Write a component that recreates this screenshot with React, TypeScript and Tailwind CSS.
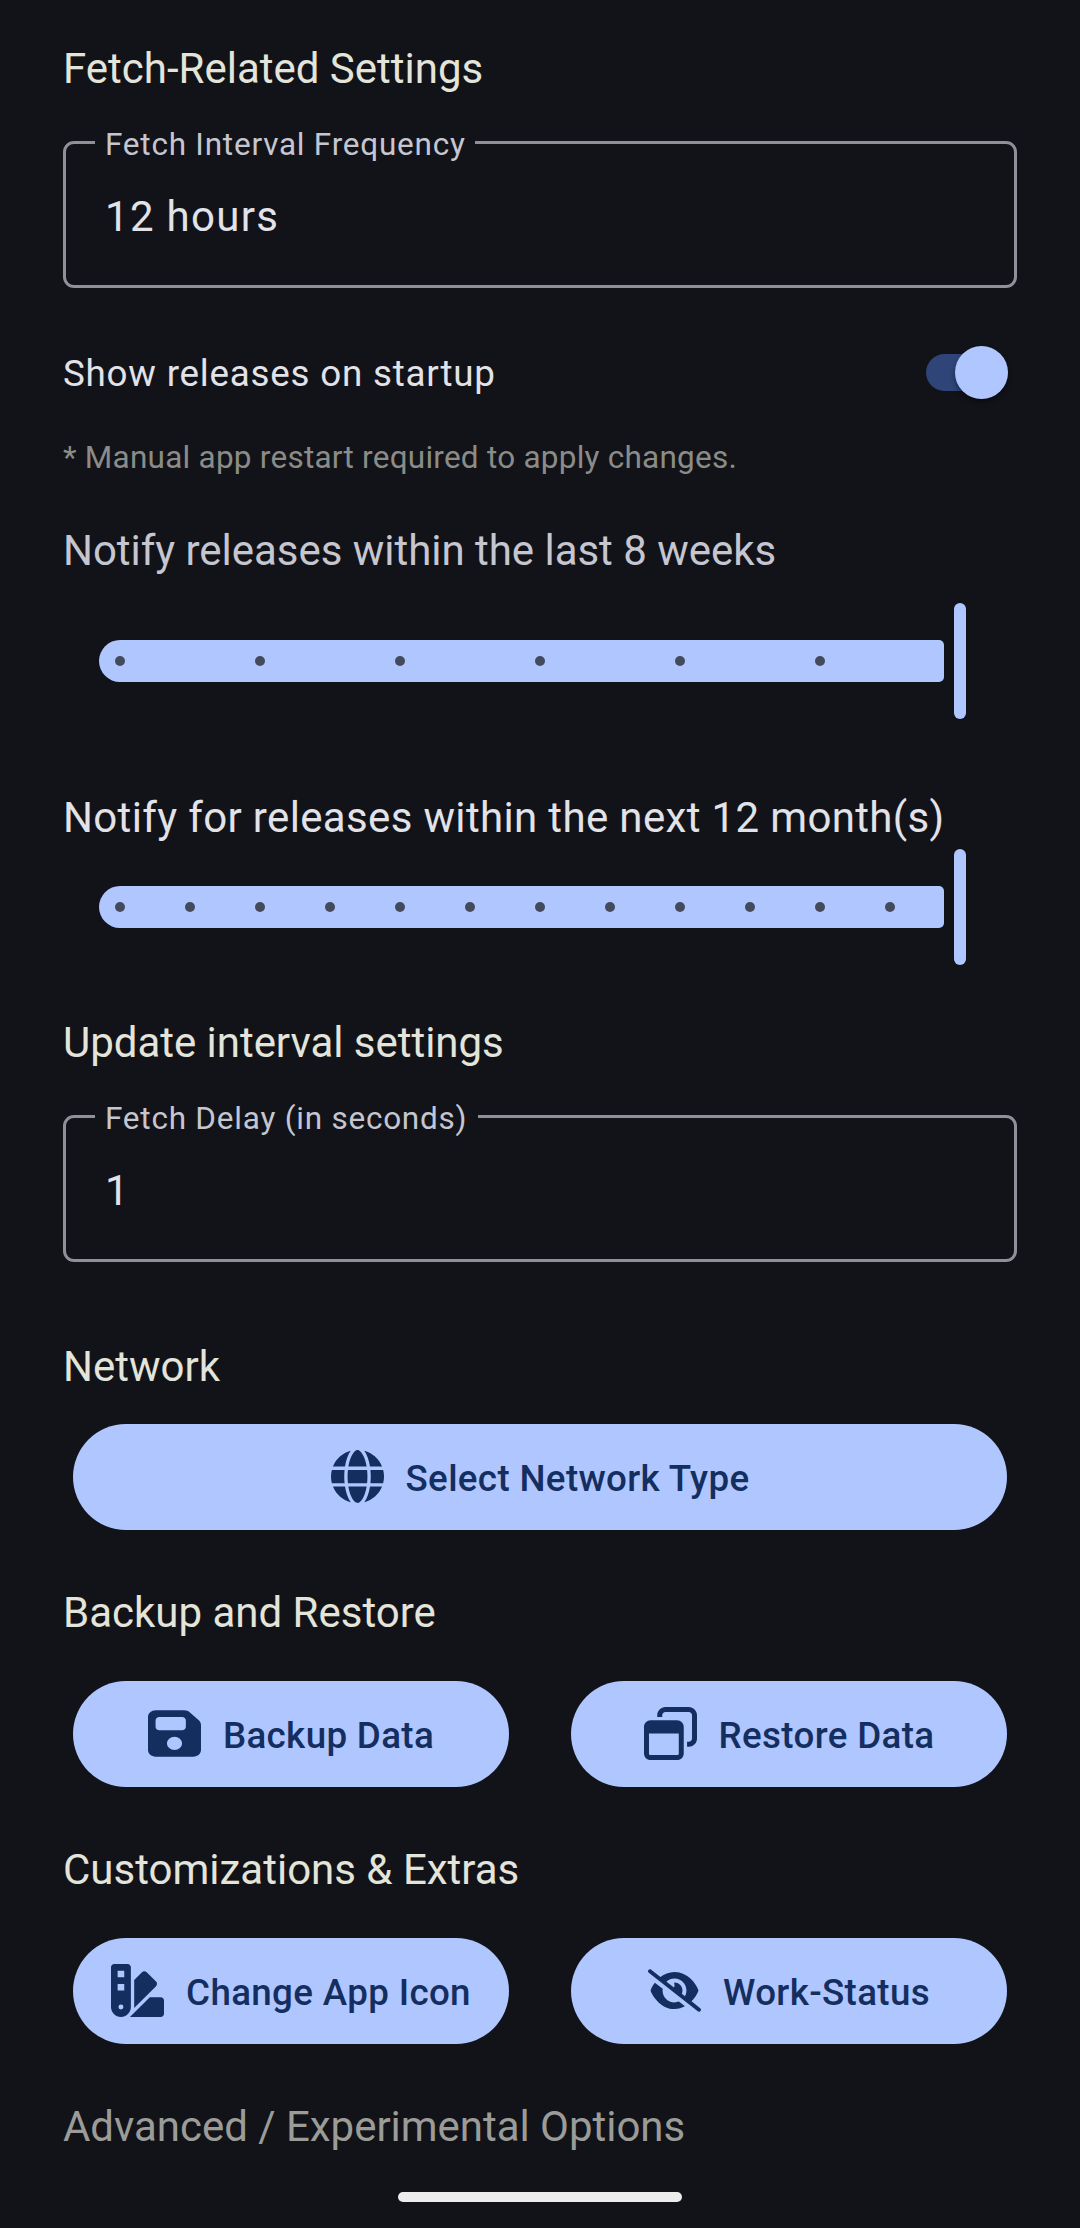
import React from "react";
import {
  FaEyeSlash,
  FaFloppyDisk,
  FaGlobe,
  FaRegWindowRestore,
  FaSwatchbook,
} from "react-icons/fa6";

function Heading({ className, children }: { className: string; children: React.ReactNode }) {
  return (
    <h2 className={`whitespace-nowrap text-[42px] leading-[50px] font-normal ${className}`}>
      {children}
    </h2>
  );
}

function OutlinedField({
  label,
  value,
  className,
  labelClass,
}: {
  label: string;
  value: string;
  className: string;
  labelClass: string;
}) {
  return (
    <div
      className={`relative h-[147px] rounded-[11px] border-[3px] border-[#8f9099] pt-[48px] pl-[39px] ${className}`}
    >
      <span
        className={`absolute top-[-18px] left-[29px] whitespace-nowrap bg-[#121318] pl-[10px] text-[31.5px] leading-[38px] tracking-[0.77px] text-[#c5c6d0] ${labelClass}`}
      >
        {label}
      </span>
      <div className="text-[42px] leading-[50px] tracking-[1.3px] text-[#e2e2e9]">{value}</div>
    </div>
  );
}

function Slider({ ticks, className }: { ticks: number; className: string }) {
  return (
    <div className={`mx-9 flex h-[116px] items-center gap-[10px] ${className}`}>
      <div className="flex h-[42px] w-[845px] items-center rounded-l-[21px] rounded-r-[5px] bg-[#b0c6ff] pl-4">
        {Array.from({ length: ticks }, (_, i) => (
          <span key={i} className={ticks === 6 ? "w-[140px] shrink-0" : "w-[70px] shrink-0"}>
            <span className="block size-[10px] rounded-full bg-[#424a5c]" />
          </span>
        ))}
      </div>
      <div className="h-full w-3 rounded-full bg-[#b0c6ff]" />
    </div>
  );
}

function PillButton({ icon, label }: { icon: React.ReactNode; label: string }) {
  return (
    <button className="flex h-[106px] w-full items-center justify-center gap-[22px] rounded-full bg-[#b0c6ff] text-[#152e60]">
      <span className="pb-[2px]">{icon}</span>
      <span className="whitespace-nowrap pt-1 text-[36.75px] leading-[44px] font-medium tracking-[0.34px]">
        {label}
      </span>
    </button>
  );
}

export default function App() {
  return (
    <main className="flex h-[2228px] w-[1080px] flex-col overflow-hidden bg-[#121318] px-[63px] pt-[44px] font-[Roboto,sans-serif]">
      <Heading className="text-[#e3e4da]">Fetch-Related Settings</Heading>
      <OutlinedField
        className="mt-[47px]"
        labelClass="w-[380px]"
        label="Fetch Interval Frequency"
        value="12 hours"
      />

      <div className="mt-[58px] flex h-[53px] items-center justify-between pr-[9px]">
        <span className="pt-[3px] text-[36.75px] leading-[44px] tracking-[0.78px] text-[#e2e2e9]">
          Show releases on startup
        </span>
        <div className="flex h-[37px] w-[82px] items-center justify-end rounded-full bg-[#2f4578]">
          <span className="size-[53px] shrink-0 rounded-full bg-[#b0c6ff] shadow-[0_3px_5px_rgba(0,0,0,0.4)]" />
        </div>
      </div>
      <p className="mt-[40px] text-[31.5px] leading-[38px] tracking-[0.24px] text-[#8b8c88]">
        * Manual app restart required to apply changes.
      </p>

      <Heading className="mt-[49px] tracking-[-0.03px] text-[#c5c6d0]">
        Notify releases within the last 8 weeks
      </Heading>
      <Slider ticks={6} className="mt-[27px]" />

      <Heading className="mt-[74px] tracking-[0.35px] text-[#e2e2e9]">
        Notify for releases within the next 12 month(s)
      </Heading>
      <Slider ticks={12} className="mt-[6px]" />

      <Heading className="mt-[53px] tracking-[-0.03px] text-[#e3e4da]">
        Update interval settings
      </Heading>
      <OutlinedField
        className="mt-[47px]"
        labelClass="w-[383px]"
        label="Fetch Delay (in seconds)"
        value="1"
      />

      <Heading className="mt-[80px] text-[#e3e4da]">Network</Heading>
      <div className="mt-[32px] px-[10px]">
        <PillButton icon={<FaGlobe className="size-[53px]" />} label="Select Network Type" />
      </div>

      <Heading className="mt-[58px] text-[#e3e4da]">Backup and Restore</Heading>
      <div className="mt-[43px] grid grid-cols-2 gap-[62px] px-[10px]">
        <PillButton
          icon={<FaFloppyDisk preserveAspectRatio="none" className="size-[53px]" />}
          label="Backup Data"
        />
        <PillButton icon={<FaRegWindowRestore className="size-[53px]" />} label="Restore Data" />
      </div>

      <Heading className="mt-[58px] text-[#e3e4da]">Customizations &amp; Extras</Heading>
      <div className="mt-[43px] grid grid-cols-2 gap-[62px] px-[10px]">
        <PillButton icon={<FaSwatchbook className="size-[53px]" />} label="Change App Icon" />
        <PillButton icon={<FaEyeSlash className="size-[53px]" />} label="Work-Status" />
      </div>

      <Heading className="mt-[58px] tracking-[-0.03px] text-[#9b9c98]">
        Advanced / Experimental Options
      </Heading>
      <div className="mx-auto mt-[40px] h-[10px] w-[284px] rounded-full bg-[#ececec]" />
    </main>
  );
}
